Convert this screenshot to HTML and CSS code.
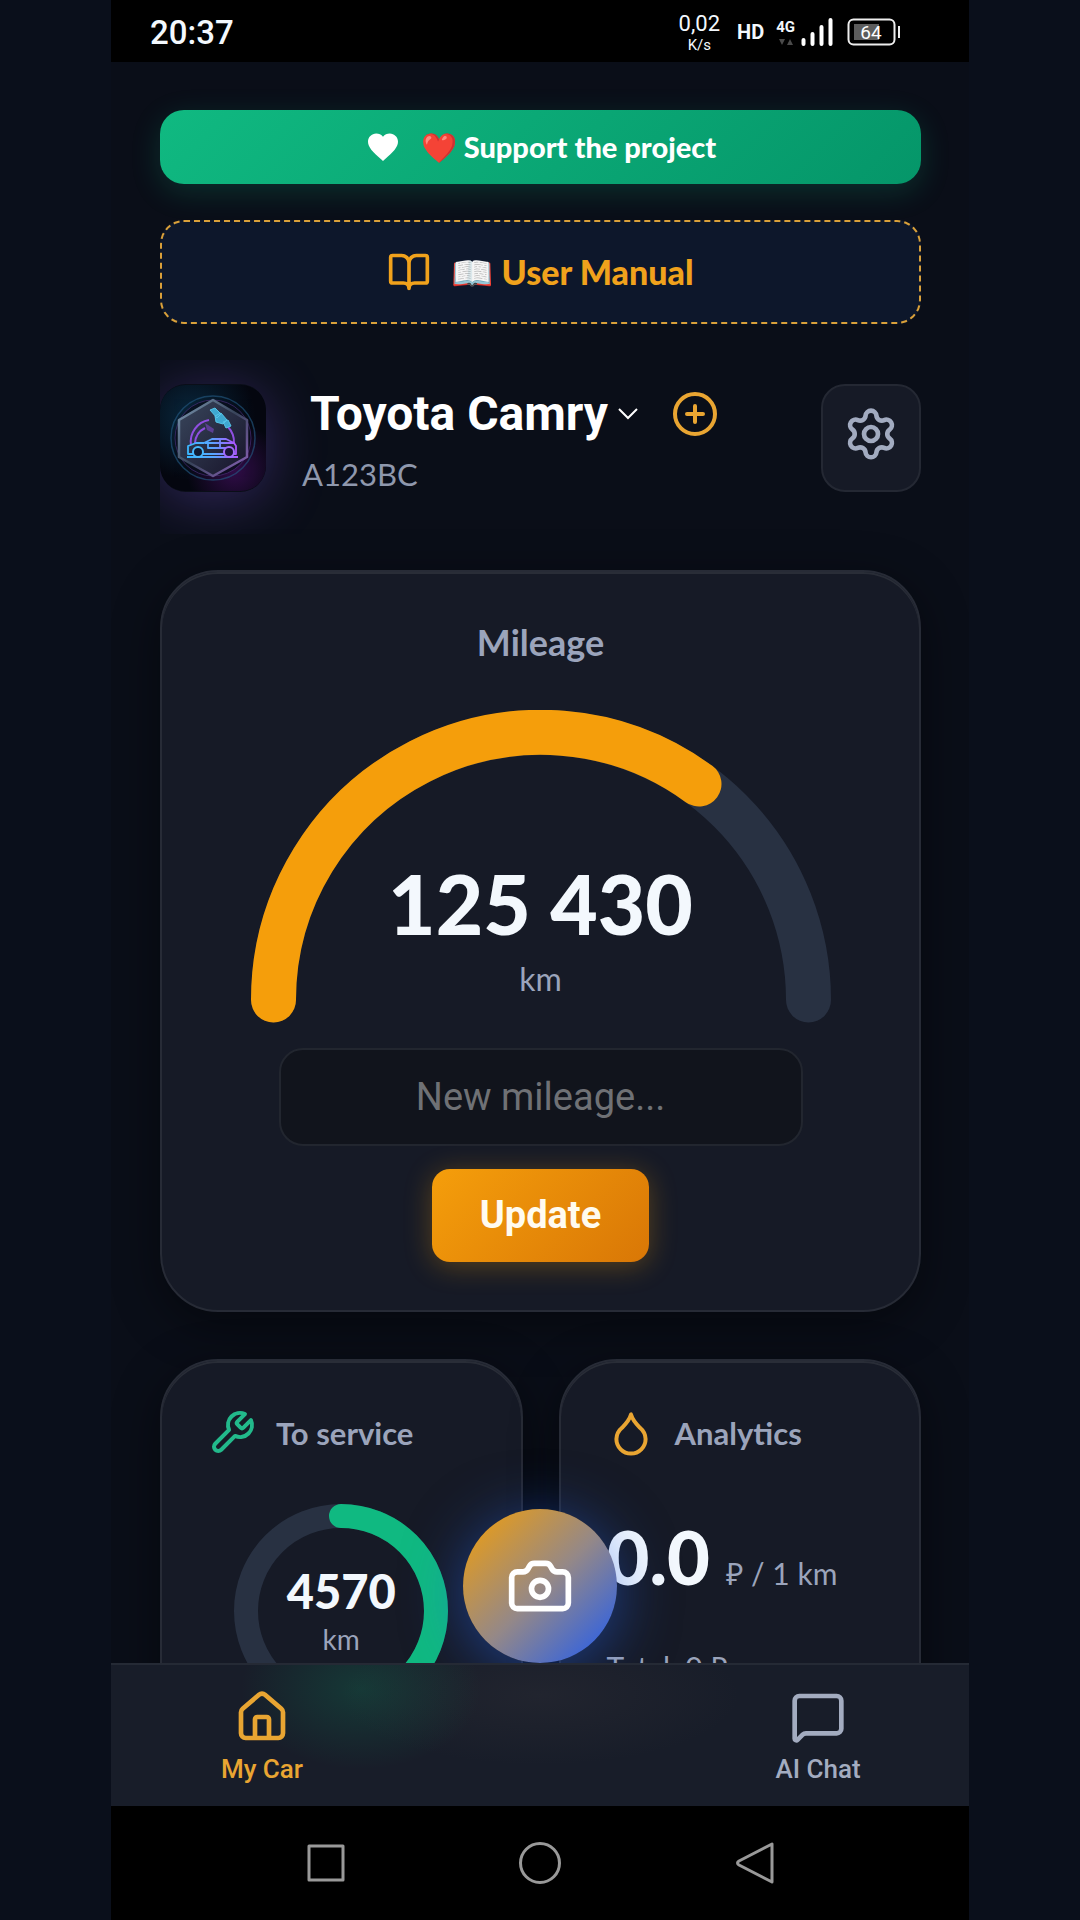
FILE: index.html
```html
<!DOCTYPE html>
<html lang="en">
<head>
<meta charset="utf-8">
<meta name="viewport" content="width=device-width, initial-scale=1">
<title>My Car</title>
<link rel="stylesheet" href="styles.css">
</head>
<body>
<div class="phone">
  <header class="status">
    <time class="status-time">20:37</time>
    <div class="status-icons">
      <div class="speed"><span class="speed-value">0,02</span><span class="speed-unit">K/s</span></div>
      <span class="hd">HD</span>
      <div class="network">
        <span class="network-type">4G</span>
        <svg class="network-arrows" viewBox="0 0 14 8" aria-hidden="true"><path d="M0 1h6L3 7zM8 7h6l-3-6z"/></svg>
      </div>
      <svg class="signal" viewBox="0 0 32 28" aria-hidden="true"><path d="M2.500 22v4M11.500 16v10M20.500 9v17M29.500 2v24"/></svg>
      <svg class="battery" viewBox="0 0 54 28" role="img" aria-label="Battery 64%">
        <rect class="battery-fill" x="7" y="6" width="25" height="16"/>
        <rect class="battery-frame" x="1.500" y="1.500" width="46" height="25" rx="5"/>
        <path class="battery-frame" d="M52 8v12"/>
        <text x="24" y="21" text-anchor="middle">64</text>
      </svg>
    </div>
  </header>

  <div class="viewport">
    <main class="content">
      <div class="top">
        <button class="support" type="button">
          <svg class="heart" viewBox="0 0 24 24" aria-hidden="true"><path d="M12 21.350l-1.450-1.320C5.400 15.360 2 12.280 2 8.500 2 5.420 4.420 3 7.500 3c1.740 0 3.410.810 4.500 2.090C13.090 3.810 14.760 3 16.500 3 19.580 3 22 5.420 22 8.500c0 3.780-3.400 6.860-8.550 11.540z"/></svg>
          <span>❤️ Support the project</span>
        </button>
        <button class="manual" type="button">
          <svg class="icon icon-book" viewBox="0 0 24 24" aria-hidden="true"><path d="M12 7v14M3 18a1 1 0 0 1-1-1V4a1 1 0 0 1 1-1h5a4 4 0 0 1 4 4 4 4 0 0 1 4-4h5a1 1 0 0 1 1 1v13a1 1 0 0 1-1 1h-6a3 3 0 0 0-3 3 3 3 0 0 0-3-3z"/></svg>
          <span>📖 User Manual</span>
        </button>

        <section class="car">
          <svg class="avatar" viewBox="0 0 106 106" role="img" aria-label="Car logo">
            <defs>
              <radialGradient id="logoBlue" cx="0.3" cy="0.3" r="0.6"><stop offset="0" stop-color="#0c3e5c"/><stop offset="1" stop-color="#0c3e5c" stop-opacity="0"/></radialGradient>
              <radialGradient id="logoPurple" cx="0.7" cy="0.8" r="0.45"><stop offset="0" stop-color="#451062"/><stop offset="1" stop-color="#451062" stop-opacity="0"/></radialGradient>
              <linearGradient id="logoHex" x1="0" y1="0" x2="1" y2="1"><stop offset="0" stop-color="#39465c"/><stop offset="1" stop-color="#17142a"/></linearGradient>
              <linearGradient id="logoEdge" x1="0" y1="0" x2="1" y2="1"><stop offset="0" stop-color="#7f9bb5"/><stop offset="0.5" stop-color="#38445a"/><stop offset="1" stop-color="#8f63bd"/></linearGradient>
              <linearGradient id="logoCar" x1="27" y1="70" x2="78" y2="60" gradientUnits="userSpaceOnUse"><stop offset="0" stop-color="#39b8ff"/><stop offset="0.5" stop-color="#57a6ff"/><stop offset="1" stop-color="#b44dff"/></linearGradient>
            </defs>
            <rect width="106" height="106" rx="25" fill="#04060f"/>
            <rect width="106" height="106" rx="25" fill="url(#logoBlue)" opacity="0.600"/>
            <rect width="106" height="106" rx="25" fill="url(#logoPurple)" opacity="0.700"/>
            <circle cx="53" cy="53" r="42" fill="none" stroke="#255c85" stroke-width="1.500" opacity="0.600"/>
            <circle cx="53" cy="53" r="38" fill="#090e1c" stroke="#40296b" opacity="0.800"/>
            <path d="M53 15l34 20v37L53 91 19 72V35z" fill="url(#logoHex)" stroke="url(#logoEdge)" stroke-width="2.500" stroke-linejoin="round"/>
            <path d="M31 60a22 22 0 0 1 18-25M68 42a22 22 0 0 1 6 16M35 58a18 18 0 0 1 10-15" fill="none" stroke="#8f4fe0" stroke-width="2"/>
            <path d="M27 72h51M33 69h-5v-8l8-3h8l8-4h14l8 4 2 3v8h-3M43 69h21M45 58h29M48 58v5h22M60 54v9" fill="none" stroke="url(#logoCar)" stroke-width="1.800" stroke-linejoin="round"/>
            <circle cx="38" cy="67" r="5" fill="#101b33" stroke="#48b9ff" stroke-width="2"/>
            <circle cx="69" cy="67" r="5" fill="#1b1538" stroke="#a36bff" stroke-width="2"/>
            <path d="M50 25l5-2 6 6-4 4zM63 37l5-2 3 6-5 2zM55 31l6-3 6 7-4 4-7-2z" fill="#3fa8d0" stroke="#56c4e8"/>
            <path d="M45 38l9 6-1 4-6-3z" fill="#5c3f94"/>
          </svg>
          <div class="car-info">
            <div class="car-row">
              <select class="car-select" aria-label="Car"><option>Toyota Camry</option></select>
              <svg class="chevron" viewBox="0 0 22 14" aria-hidden="true"><path d="M2 2l9 9 9-9"/></svg>
              <button class="add" type="button" aria-label="Add car">
                <svg class="icon" viewBox="0 0 24 24" aria-hidden="true"><circle cx="12" cy="12" r="10"/><path d="M8 12h8M12 8v8"/></svg>
              </button>
            </div>
            <p class="plate">A123BC</p>
          </div>
          <button class="settings" type="button" aria-label="Settings">
            <svg class="icon" viewBox="0 0 24 24" aria-hidden="true"><path d="M9.671 4.136a2.340 2.340 0 0 1 4.659 0 2.340 2.340 0 0 0 3.319 1.915 2.340 2.340 0 0 1 2.330 4.033 2.340 2.340 0 0 0 0 3.831 2.340 2.340 0 0 1-2.330 4.033 2.340 2.340 0 0 0-3.319 1.915 2.340 2.340 0 0 1-4.659 0 2.340 2.340 0 0 0-3.320-1.915 2.340 2.340 0 0 1-2.330-4.033 2.340 2.340 0 0 0 0-3.831A2.340 2.340 0 0 1 6.350 6.051a2.340 2.340 0 0 0 3.319-1.915"/><circle cx="12" cy="12" r="3"/></svg>
          </button>
        </section>

        <section class="card mileage">
          <h2 class="card-title mileage-title">Mileage</h2>
          <div class="gauge">
            <svg class="gauge-arc" viewBox="0 0 580 313" aria-hidden="true">
              <path class="track" d="M22.500 290a267.500 267.500 0 0 1 535 0"/>
              <path class="progress" d="M22.500 290A267.500 267.500 0 0 1 448 74"/>
            </svg>
            <div class="gauge-text"><strong class="gauge-value">125 430</strong><span class="unit">km</span></div>
          </div>
          <form class="mileage-form">
            <input class="mileage-input" type="text" inputmode="numeric" placeholder="New mileage..." aria-label="New mileage">
            <button class="update" type="button">Update</button>
          </form>
        </section>
      </div>

      <div class="stats">
        <section class="card stat">
          <div class="stat-head">
            <svg class="icon icon-green" viewBox="0 0 24 24" aria-hidden="true"><path d="M14.700 6.300a1 1 0 0 0 0 1.400l1.600 1.600a1 1 0 0 0 1.400 0l3.770-3.770a6 6 0 0 1-7.940 7.940l-6.910 6.910a2.120 2.120 0 0 1-3-3l6.910-6.910a6 6 0 0 1 7.940-7.940l-3.760 3.760z"/></svg>
            <h2 class="card-title">To service</h2>
          </div>
          <div class="ring">
            <svg class="ring-arc" viewBox="0 0 214 214" aria-hidden="true">
              <circle class="track" cx="107" cy="107" r="95"/>
              <path class="progress" d="M107 12A95 95 0 0 1 107 202"/>
            </svg>
            <div class="ring-text"><strong class="ring-value">4570</strong><span class="unit">km</span></div>
          </div>
        </section>
        <section class="card stat">
          <div class="stat-head">
            <svg class="icon icon-amber" viewBox="0 0 24 24" aria-hidden="true"><path d="M12 2.700c-.700 2.600-2.300 4.400-4.500 6.700a7.700 7.700 0 0 0-2.800 5.600 7.300 7.300 0 0 0 14.600 0 7.700 7.700 0 0 0-2.800-5.600C14.300 7.100 12.700 5.300 12 2.700z"/></svg>
            <h2 class="card-title">Analytics</h2>
          </div>
          <p class="cost"><strong class="cost-value">0.0</strong><span class="cost-unit">₽ / 1 km</span></p>
          <p class="total">Total: 0 ₽</p>
        </section>
      </div>
    </main>

    <div class="dock">
      <button class="fab" type="button" aria-label="Take a photo">
        <svg class="icon" viewBox="0 0 24 24" aria-hidden="true"><path d="M13.997 4a2 2 0 0 1 1.760 1.050l.486.900A2 2 0 0 0 18.003 7H20a2 2 0 0 1 2 2v9a2 2 0 0 1-2 2H4a2 2 0 0 1-2-2V9a2 2 0 0 1 2-2h1.997a2 2 0 0 0 1.759-1.048l.489-.904A2 2 0 0 1 10.004 4z"/><circle cx="12" cy="13" r="3"/></svg>
      </button>
      <nav class="tabs">
        <a class="tab tab-active" href="#car">
          <svg class="icon" viewBox="0 0 24 24" aria-hidden="true"><path d="M15 21v-8a1 1 0 0 0-1-1h-4a1 1 0 0 0-1 1v8M3 10a2 2 0 0 1 .709-1.528l7-5.999a2 2 0 0 1 2.582 0l7 5.999A2 2 0 0 1 21 10v9a2 2 0 0 1-2 2H5a2 2 0 0 1-2-2z"/></svg>
          <span>My Car</span>
        </a>
        <a class="tab" href="#chat">
          <svg class="icon" viewBox="0 0 24 24" aria-hidden="true"><path d="M22 17a2 2 0 0 1-2 2H6.828a2 2 0 0 0-1.414.586l-2.202 2.202A.710.710 0 0 1 2 21.286V5a2 2 0 0 1 2-2h16a2 2 0 0 1 2 2z"/></svg>
          <span>AI Chat</span>
        </a>
      </nav>
    </div>
  </div>

  <footer class="system">
    <button class="system-key" type="button" aria-label="Recent apps"><svg viewBox="0 0 44 44" aria-hidden="true"><rect x="6" y="5" width="34" height="34"/></svg></button>
    <button class="system-key" type="button" aria-label="Home"><svg viewBox="0 0 44 44" aria-hidden="true"><circle cx="22" cy="22" r="19.500"/></svg></button>
    <button class="system-key" type="button" aria-label="Back"><svg viewBox="0 0 44 44" aria-hidden="true"><path d="M39 3v38L6 24q-3-2 0-4z"/></svg></button>
  </footer>
</div>
</body>
</html>
```

FILE: styles.css
```css
:root {
  --text: #f3f8fd;
  --muted: #9ba4bb;
  --amber: #f59e0b;
  --amber-soft: #e9a532;
  --green: #10b981;
  --card: #161a26;
  --line: #272b36;
  --track: #283142;
  --display: Lato, "Noto Sans", sans-serif;
  --system: Roboto, "Noto Sans", sans-serif;
}

* { box-sizing: border-box; }

body {
  margin: 0;
  background: #0a0f1b;
  color: var(--text);
  font-family: var(--display);
}

h2, p { margin: 0; }

button {
  padding: 0;
  border: 0;
  background: none;
  color: inherit;
  font-family: inherit;
}

svg { display: block; flex: none; }

.icon {
  width: 48px;
  height: 48px;
  fill: none;
  stroke: currentColor;
  stroke-width: 2;
  stroke-linecap: round;
  stroke-linejoin: round;
}

.phone {
  display: flex;
  flex-direction: column;
  max-width: 858px;
  height: 100vh;
  margin: 0 auto;
  background: #0a0e18;
}

/* Status bar */
.status {
  display: flex;
  align-items: center;
  justify-content: space-between;
  flex: none;
  height: 62px;
  padding: 2px 68px 0 39px;
  background: #000;
  font-family: var(--system);
}
.status-time { font-size: 33px; font-weight: 500; }
.status-icons { display: flex; align-items: center; }
.speed {
  display: flex;
  flex-direction: column;
  align-items: center;
  margin-right: 17px;
}
.speed-value { font-size: 22px; line-height: 26px; }
.speed-unit { font-size: 15px; line-height: 16px; }
.hd { margin-right: 12px; font-size: 20px; font-weight: 700; }
.network {
  display: flex;
  flex-direction: column;
  align-items: center;
  gap: 2px;
  margin-right: 6px;
}
.network-type { font-size: 15px; line-height: 18px; font-weight: 700; }
.network-arrows { width: 14px; height: 8px; fill: #4a4a4a; }
.signal {
  width: 32px;
  height: 28px;
  margin-right: 14px;
  fill: none;
  stroke: #fff;
  stroke-width: 4;
  stroke-linecap: round;
}
.battery { width: 54px; height: 28px; }
.battery-fill { fill: #5c5c5c; }
.battery-frame { fill: none; stroke: #eee; stroke-width: 2; }
.battery text { fill: #fff; font-size: 19px; }

/* Scrolling page */
.viewport { position: relative; flex: 1; min-height: 0; overflow: hidden; }
.content {
  display: flex;
  flex-direction: column;
  gap: 47px;
  padding: 48px 48px 0 49px;
}
.top { display: flex; flex-direction: column; gap: 36px; }

.support, .manual {
  display: flex;
  align-items: center;
  justify-content: center;
  gap: 20px;
  border-radius: 24px;
}
.support {
  height: 74px;
  background: linear-gradient(135deg, #10b981, #059669);
  box-shadow: 0 8px 30px rgba(16, 185, 129, 0.2);
  color: #fff;
  font-size: 29px;
  font-weight: 900;
}
.heart { width: 36px; height: 36px; fill: #fff; }
.manual {
  height: 104px;
  border: 2px dashed #d9a03a;
  background: #0d172b;
  color: #f0a21c;
  font-size: 34px;
  font-weight: 900;
}
.icon-book { width: 44px; height: 44px; }

.car {
  display: flex;
  align-items: flex-start;
  gap: 36px;
  padding: 24px 0 40px;
  overflow: hidden;
}
.avatar {
  width: 106px;
  height: 108px;
  border-radius: 26px;
  box-shadow: 0 8px 60px rgba(139, 92, 246, 0.32);
}
.car-info { flex: 1; }
.car-row { display: flex; align-items: center; height: 60px; }
.car-select {
  padding: 0 0 0 8px;
  border: 0;
  appearance: none;
  background: none;
  color: #fff;
  font: 700 48px/56px var(--system);
}
.chevron {
  width: 22px;
  height: 14px;
  margin: 0 32px 0 8px;
  fill: none;
  stroke: #fff;
  stroke-width: 2;
}
.add { color: var(--amber-soft); }
.plate {
  margin-top: 10px;
  color: #8f98ad;
  font-size: 31px;
  line-height: 40px;
}
.settings {
  display: grid;
  place-items: center;
  width: 100px;
  height: 108px;
  padding-bottom: 8px;
  border: 2px solid #242833;
  border-radius: 24px;
  background: var(--card);
  color: #a2abc0;
}
.settings .icon { width: 56px; height: 56px; }

/* Cards */
.card {
  border: 2px solid var(--line);
  border-radius: 58px;
  background: var(--card);
  box-shadow: 0 12px 48px rgba(0, 0, 0, 0.45), inset 0 2px #292d37;
}
.card-title { color: var(--muted); font-weight: 700; }
.track { fill: none; stroke: var(--track); stroke-linecap: round; }
.progress { fill: none; stroke-linecap: round; }
.unit { color: var(--muted); }

.mileage {
  display: flex;
  flex-direction: column;
  align-items: center;
  padding: 48px 36px 48px;
}
.mileage-title { font-size: 36px; line-height: 44px; }
.gauge { display: grid; margin: 46px 0 25px; }
.gauge-arc, .gauge-text { grid-area: 1 / 1; }
.gauge-arc { width: 580px; height: 313px; stroke-width: 45; }
.gauge-arc .progress { stroke: var(--amber); }
.gauge-text {
  display: flex;
  flex-direction: column;
  align-items: center;
  align-self: end;
  gap: 16px;
  padding-bottom: 24px;
}
.gauge-value { font-size: 82px; line-height: 80px; font-weight: 900; }
.gauge-text .unit { font-size: 32px; line-height: 40px; }
.mileage-form {
  display: flex;
  flex-direction: column;
  align-items: center;
  gap: 23px;
}
.mileage-input {
  width: 524px;
  height: 98px;
  border: 2px solid #22262f;
  border-radius: 24px;
  background: #11141c;
  color: var(--text);
  font: 400 38px var(--system);
  text-align: center;
}
.mileage-input::placeholder { color: #6f7175; opacity: 1; }
.update {
  padding: 0 48px;
  border-radius: 18px;
  background: linear-gradient(135deg, #f59e0b, #d97706);
  box-shadow: 0 4px 28px rgba(245, 158, 11, 0.3);
  color: #fffbf0;
  font: 700 38px/93px var(--system);
}

.stats { display: grid; grid-template-columns: 1fr 1fr; gap: 36px; }
.stat { min-height: 420px; padding: 48px 46px; }
.stat-head { display: flex; align-items: center; gap: 20px; }
.stat-head .card-title { font-size: 31px; line-height: 48px; }
.icon-green { color: #22b98b; }
.icon-amber { color: var(--amber-soft); }
.ring {
  display: grid;
  place-items: center;
  margin-top: 47px;
}
.ring-arc, .ring-text { grid-area: 1 / 1; }
.ring-arc { width: 214px; height: 214px; stroke-width: 24; }
.ring-arc .progress { stroke: var(--green); }
.ring-text { display: flex; flex-direction: column; align-items: center; gap: 8px; }
.ring-value { font-size: 47px; line-height: 48px; font-weight: 900; }
.ring-text .unit { font-size: 28px; line-height: 32px; }
.cost {
  display: flex;
  align-items: baseline;
  gap: 16px;
  margin-top: 64px;
  line-height: 72px;
  white-space: nowrap;
}
.cost-value { font-size: 74px; font-weight: 900; }
.cost-unit { color: var(--muted); font-size: 30px; }
.total {
  margin-top: 40px;
  color: var(--muted);
  font-size: 30px;
  line-height: 36px;
}

/* Bottom dock */
.dock { position: absolute; inset: auto 0 0; }
.fab {
  position: absolute;
  bottom: 100%;
  left: 50%;
  display: grid;
  place-items: center;
  width: 154px;
  height: 154px;
  transform: translateX(-50%);
  border-radius: 50%;
  background: linear-gradient(135deg, #e29b20 10%, #948888 52%, #3563dd 90%);
  box-shadow: 0 8px 60px rgba(37, 99, 235, 0.5);
  color: #fff;
}
.fab .icon { width: 68px; height: 68px; }
.tabs {
  position: relative;
  display: flex;
  justify-content: space-between;
  height: 143px;
  padding: 24px 48px 0;
  border-top: 2px solid #252a35;
  background:
    radial-gradient(120px 80px at 250px 24px, rgba(16, 120, 85, 0.3), transparent),
    radial-gradient(200px 70px at 50% 30px, rgba(90, 80, 80, 0.14), transparent),
    #181d29;
}
.tab {
  display: flex;
  flex-direction: column;
  align-items: center;
  gap: 8px;
  width: 206px;
  color: #a3acc0;
  font: 500 26px/32px var(--system);
  text-decoration: none;
}
.tab .icon { width: 56px; height: 56px; }
.tab-active { color: var(--amber-soft); }

/* System navigation */
.system {
  display: flex;
  flex: none;
  height: 114px;
  padding: 0 107px;
  background: #000;
}
.system-key { display: grid; flex: 1; place-items: center; }
.system-key svg {
  width: 44px;
  height: 44px;
  fill: none;
  stroke: #999;
  stroke-width: 3;
  stroke-linejoin: round;
}
```
